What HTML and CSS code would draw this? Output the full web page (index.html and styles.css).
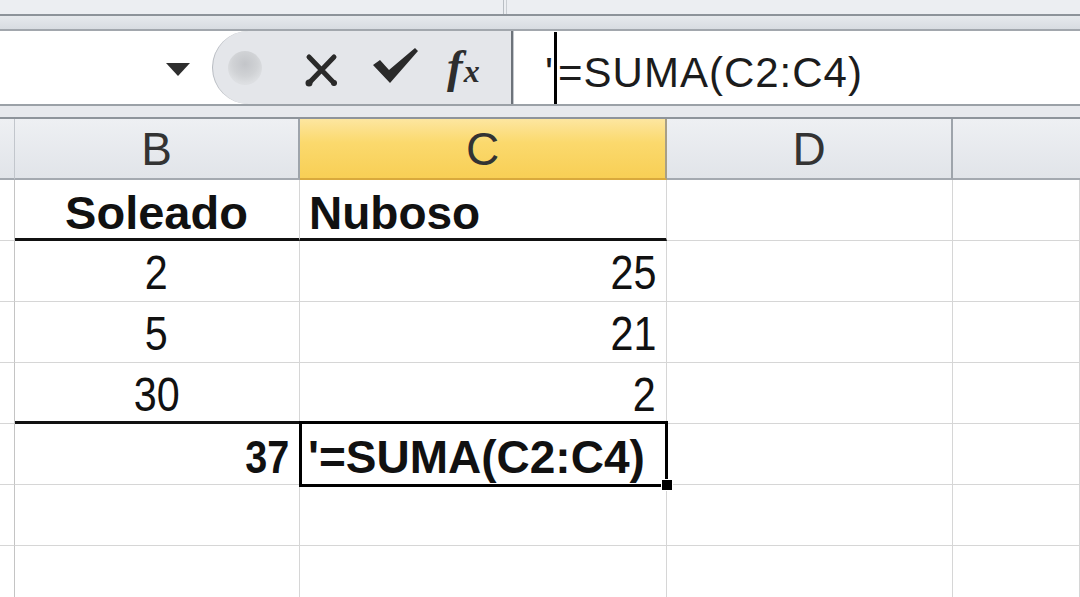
FILE: index.html
```html
<!DOCTYPE html>
<html lang="es">
<head>
  <meta charset="UTF-8" />
  <title>Hoja de cálculo</title>
  <link rel="stylesheet" href="styles.css">
</head>
<body>
  <div class="app">
    <div class="top-strip"><div class="strip-divider"></div></div>
    <div class="top-band"></div>

    <div class="formula-bar">
      <div class="name-box"><span class="dropdown"></span></div>
      <div class="fx-group">
        <span class="blob"></span>
        <svg class="icon-cancel" viewBox="0 0 37 36">
          <path d="M6 5 L31 31 M31 5 L6 31" stroke="#2a2a2a" stroke-width="5" stroke-linecap="round" fill="none" />
          <circle cx="6" cy="31" r="3.5" fill="#2a2a2a" />
          <circle cx="31" cy="31" r="3" fill="#2a2a2a" />
        </svg>
        <svg class="icon-enter" viewBox="0 0 47 36">
          <polygon points="1,17 8,12 17,22 43,0 46,3 18,35" fill="#2a2a2a" />
        </svg>
        <span class="fx"><i>f</i><i class="fx-x">x</i></span>
      </div>
      <div class="formula-input">
        <span class="formula-text">'</span>
        <span class="caret"></span>
        <span class="formula-text">=SUMA(C2:C4)</span>
      </div>
    </div>
    <div class="mid-band"></div>

    <div class="sheet">
      <div class="col-head corner"></div>
      <div class="col-head">B</div>
      <div class="col-head active">C</div>
      <div class="col-head">D</div>
      <div class="col-head last"></div>

      <div class="cell row-head"></div>
      <div class="cell center bold thick">Soleado</div>
      <div class="cell bold thick">Nuboso</div>
      <div class="cell"></div>
      <div class="cell"></div>

      <div class="cell row-head"></div>
      <div class="cell center"><span class="num">2</span></div>
      <div class="cell right"><span class="num">25</span></div>
      <div class="cell"></div>
      <div class="cell"></div>

      <div class="cell row-head"></div>
      <div class="cell center"><span class="num">5</span></div>
      <div class="cell right"><span class="num">21</span></div>
      <div class="cell"></div>
      <div class="cell"></div>

      <div class="cell row-head"></div>
      <div class="cell center thick"><span class="num">30</span></div>
      <div class="cell right"><span class="num">2</span></div>
      <div class="cell"></div>
      <div class="cell"></div>

      <div class="cell row-head"></div>
      <div class="cell right bold"><span class="num">37</span></div>
      <div class="cell bold selected">'=SUMA(C2:C4)</div>
      <div class="cell"></div>
      <div class="cell"></div>

      <div class="cell row-head"></div>
      <div class="cell"></div>
      <div class="cell"></div>
      <div class="cell"></div>
      <div class="cell"></div>

      <div class="cell row-head"></div>
      <div class="cell"></div>
      <div class="cell"></div>
      <div class="cell"></div>
      <div class="cell"></div>
    </div>
  </div>
</body>
</html>
```

FILE: styles.css
```css
* {
  box-sizing: border-box;
}

body {
  margin: 0;
  background: #fff;
  font-family: "Liberation Sans", Arial, sans-serif;
  color: #111;
  overflow: hidden;
}

.app {
  width: 1080px;
  height: 597px;
  overflow: hidden;
}

/* ribbon edge and bands */
.top-strip {
  height: 16px;
  background: #eceef2;
  border-bottom: 2px solid #8d939a;
  padding-left: 503px;
}

.strip-divider {
  width: 4px;
  height: 14px;
  border-left: 1px solid #b9bec4;
  border-right: 1px solid #c9cdd2;
}

.top-band {
  height: 15px;
  background: linear-gradient(#e6e9ed, #d8dce1);
  border-bottom: 2px solid #a2a7ad;
}

.formula-bar {
  display: flex;
  height: 75px;
  background: #fff;
  border-bottom: 2px solid #9ba1a7;
}

.name-box {
  width: 212px;
  display: flex;
  justify-content: flex-end;
  align-items: center;
  padding-right: 22px;
}

.dropdown {
  margin-top: 4px;
  border-left: 12px solid transparent;
  border-right: 12px solid transparent;
  border-top: 13px solid #2e2e2e;
}

.fx-group {
  width: 301px;
  display: flex;
  align-items: center;
  background: #e4e6ea;
  border-left: 1px solid #b7bbc1;
  border-right: 2px solid #6d737a;
  border-radius: 37px 0 0 37px;
}

.blob {
  width: 34px;
  height: 34px;
  margin-left: 15px;
  border-radius: 50%;
  background: radial-gradient(circle at 50% 38%, #c3c5c9 0%, #d0d2d5 45%, #dcdee1 70%, #e4e6ea 100%);
}

.icon-cancel {
  width: 37px;
  height: 36px;
  margin-left: 41px;
  margin-top: 4px;
}

.icon-enter {
  width: 47px;
  height: 38px;
  margin-left: 32px;
  margin-top: -4px;
}

.fx {
  display: flex;
  align-items: baseline;
  margin-left: 28px;
  margin-top: -2px;
  font-family: "Liberation Serif", "DejaVu Serif", serif;
  font-weight: bold;
  color: #2e2e2e;
  white-space: nowrap;
}

.fx i {
  font-size: 47px;
  line-height: 1;
}

.fx .fx-x {
  font-size: 32px;
  margin-left: 1px;
}

.formula-input {
  flex: 1;
  display: flex;
  align-items: stretch;
  padding-left: 31px;
  border-left: 1px solid #c4c8cd;
}

.formula-text {
  align-self: flex-end;
  padding-bottom: 10px;
  font-size: 42px;
  line-height: 1;
  letter-spacing: 1px;
  color: #1c1c1c;
  white-space: pre;
}

.caret {
  width: 3px;
  margin: 1px 1px 0 0;
  background: #000;
}

.mid-band {
  height: 13px;
  background: #e7e9ed;
  border-bottom: 2px solid #8e949b;
}

/* grid */
.sheet {
  display: grid;
  grid-template-columns: 15px 285px 367px 286px 1fr;
  grid-auto-rows: 61px;
}

.col-head {
  display: flex;
  align-items: center;
  justify-content: center;
  font-size: 46px;
  color: #333;
  background: linear-gradient(#eef0f3, #e1e4e9);
  border-right: 2px solid #9ea4ab;
  border-bottom: 2px solid #a4a9b0;
}

.col-head.corner {
  border-right: 1px solid #c2c6cc;
}

.col-head.active {
  background: linear-gradient(#fde6a0 0%, #fbd96d 40%, #f8cf55 100%);
  border-bottom-color: #d9a93c;
  border-right-color: #a89f86;
}

.col-head.last {
  border-right: none;
}

.cell {
  display: flex;
  align-items: flex-end;
  padding: 0 10px 4px 9px;
  font-size: 48px;
  line-height: 1;
  white-space: nowrap;
  border-right: 1px solid #d6d6d6;
  border-bottom: 1px solid #d6d6d6;
}

.cell.row-head {
  padding: 0;
  border-right-color: #c4c4c4;
}

.cell.center {
  justify-content: center;
}

.cell.right {
  justify-content: flex-end;
}

.cell.bold {
  font-weight: bold;
  font-size: 46px;
}

.cell.thick {
  border-bottom: 3px solid #111;
  padding-bottom: 2px;
}

.cell.center.bold {
  font-size: 47px;
}

.num {
  display: inline-block;
  transform: scaleX(0.86);
}

.center .num {
  transform-origin: center;
}

.right .num {
  transform-origin: right;
}

.cell.selected {
  position: relative;
  padding-left: 8px;
}

.cell.selected::after {
  content: "";
  position: absolute;
  left: -1px;
  top: -3px;
  right: -2px;
  bottom: -3px;
  border: 3px solid #000;
}

.cell.selected::before {
  content: "";
  position: absolute;
  right: -7px;
  bottom: -7px;
  width: 10px;
  height: 10px;
  background: #000;
  border: 1px solid #fff;
  z-index: 1;
}
```
